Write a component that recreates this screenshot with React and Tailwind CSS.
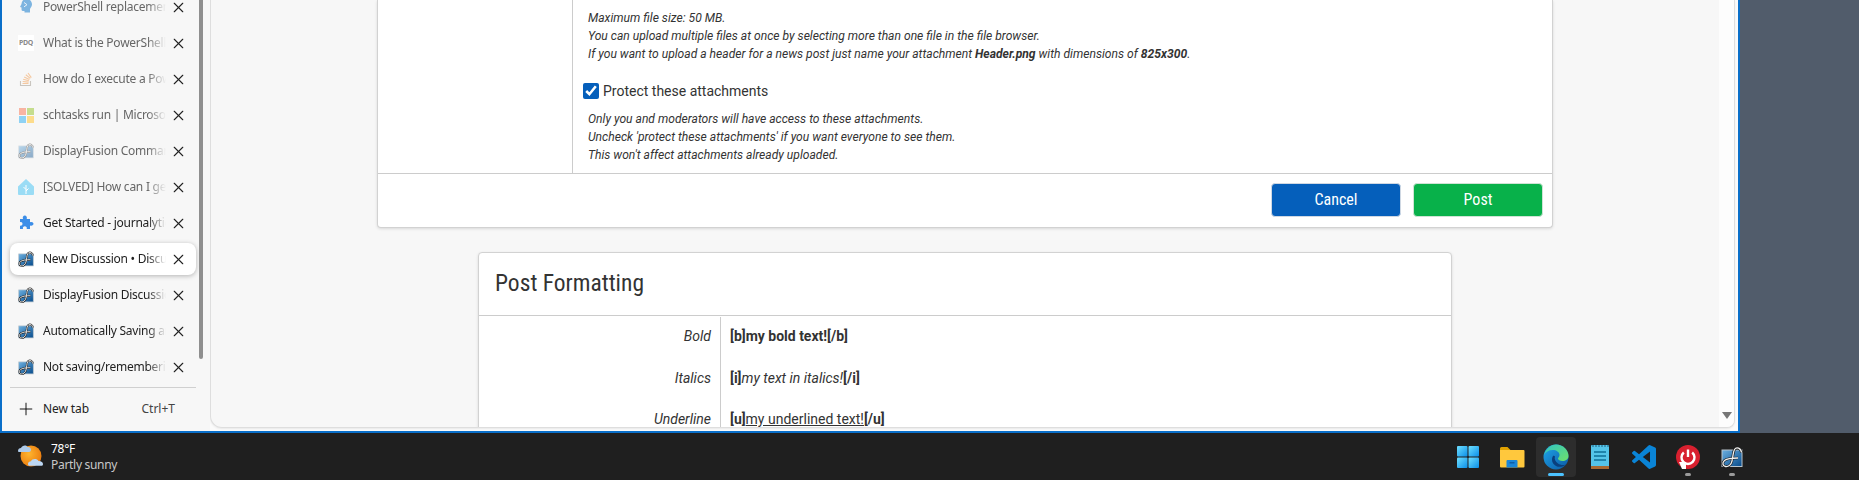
import React from 'react';
import { X, Plus } from 'lucide-react';

const DfIcon = ({ size = 16, faded = false }) => (
  <svg width={size} height={size} viewBox="0 0 22 22" className={faded ? 'opacity-45' : ''}>
    <defs>
      <linearGradient id="dfg" x1="0" y1="0" x2="1" y2="1">
        <stop offset="0" stopColor="#6db0e0" />
        <stop offset="1" stopColor="#064a8a" />
      </linearGradient>
    </defs>
    <rect x="1" y="4" width="20" height="16.500" fill="url(#dfg)" stroke="#b9c4cc" strokeWidth="1" />
    <path d="M20.500 6.500C20 2 15.500 .5 13.500 3.500 12 6 12 11 11 15c-.8 3.500-3.500 6-6.500 5.500C1.500 20 1 16.500 3.500 14.500 6 12.500 11 12 17 12" fill="none" stroke="#1a1a1a" strokeWidth="2.600" />
    <path d="M20.500 6.500C20 2 15.500 .5 13.500 3.500 12 6 12 11 11 15c-.8 3.500-3.500 6-6.500 5.500C1.500 20 1 16.500 3.500 14.500 6 12.500 11 12 17 12" fill="none" stroke="#f2f2f2" strokeWidth="1.300" />
  </svg>
);

const PsIcon = () => (
  <svg width="16" height="16" viewBox="0 0 16 16">
    <path d="M8 0c4 0 6 2.500 6 5.500 0 2-1.500 3-2 4.500v3.500H6.500V12H4.800C3.800 12 3.500 11 3.500 10V8.500L2 8l1.500-3C3.800 2 5.500 0 8 0z" fill="#7db4e0" />
    <path d="M6 3.500l3 2.200-3 2.200" fill="none" stroke="#e8f2fa" strokeWidth="1" />
  </svg>
);

const PdqIcon = () => (
  <span className="flex h-4 w-4 items-center justify-center bg-white text-[7px] font-bold tracking-[-0.3px] text-[#8b8b8b]">
    PDQ
  </span>
);

const SoIcon = () => (
  <svg width="16" height="16" viewBox="0 0 16 16" fill="none">
    <path d="M2.500 10v4.500h10V10" stroke="#c9c5bf" strokeWidth="1.100" />
    <path d="M4.500 12.500h6M4.700 10.500l5.900.6M5.200 8.300l5.700 1.500M6.200 6l5.200 2.600M7.800 3.800l4.500 3.600M10 2l3.300 4.600" stroke="#f5c8a0" strokeWidth="1.100" />
  </svg>
);

const MsIcon = () => (
  <div className="grid h-[15px] w-[15px] grid-cols-2 gap-px">
    <span className="bg-[#f8b4a2]" />
    <span className="bg-[#c5dd8e]" />
    <span className="bg-[#8fd2f4]" />
    <span className="bg-[#fddc8c]" />
  </div>
);

const HaIcon = () => (
  <svg width="16" height="16" viewBox="0 0 16 16">
    <path d="M8 0l8 7.500V15a1 1 0 0 1-1 1H1a1 1 0 0 1-1-1V7.500z" fill="#9adcf5" />
    <path d="M8 15V6M8 10.500L5.500 8M8 12l2.500-2.500" stroke="#fff" strokeWidth="1" fill="none" />
  </svg>
);

const PuzzleIcon = () => (
  <svg width="16" height="16" viewBox="0 0 16 16">
    <path d="M2 4h3c-.8-2 .5-3.500 1.800-3.500S9.500 2 8.700 4H12v3.200c2-.8 3.500.3 3.500 1.600S14 11.300 12 10.500V14H8.700c.6-1.800-.6-2.800-1.900-2.800S4.400 12.200 5 14H2v-3.500c1.500.6 2.500-.5 2.500-1.700S3.500 6.500 2 7.200z" fill="#3c8ee8" />
  </svg>
);

const tabs = [
  { title: 'PowerShell replacement for', icon: <PsIcon />, faded: true },
  { title: 'What is the PowerShell', icon: <PdqIcon />, faded: true },
  { title: 'How do I execute a PowerShell', icon: <SoIcon />, faded: true },
  { title: 'schtasks run | Microsoft Learn', icon: <MsIcon />, faded: true },
  { title: 'DisplayFusion Command Line', icon: <DfIcon faded />, faded: true },
  { title: '[SOLVED] How can I get this', icon: <HaIcon />, faded: true },
  { title: 'Get Started - journalytic', icon: <PuzzleIcon /> },
  { title: 'New Discussion • Discussions', icon: <DfIcon />, active: true },
  { title: 'DisplayFusion Discussions', icon: <DfIcon /> },
  { title: 'Automatically Saving and', icon: <DfIcon /> },
  { title: 'Not saving/remembering', icon: <DfIcon /> },
];

const TabRow = ({ title, icon, faded, active }) => (
  <div
    className={`flex h-[32px] items-center rounded-lg pl-2 pr-[9px] ${
      active ? 'bg-white shadow-[0_1px_5px_rgba(0,0,0,0.28)]' : ''
    }`}
  >
    <div className="flex w-[16px] shrink-0 items-center justify-center">{icon}</div>
    <div
      className={`ml-[9px] w-[123px] overflow-hidden whitespace-nowrap text-[12px] tracking-[-0.25px] [mask-image:linear-gradient(to_right,black_85%,transparent)] ${
        faded ? 'text-[#666]' : 'text-[#222]'
      }`}
    >
      {title}
    </div>
    <X size={17} strokeWidth={1.6} className="ml-auto text-[#222]" />
  </div>
);

const Sidebar = () => (
  <div className="relative flex w-[208px] shrink-0 flex-col bg-[#f7f7f7] pl-[8px] pr-[14px] font-['Noto_Sans',sans-serif]">
    <div className="absolute right-[7px] top-0 h-[359px] w-[4px] rounded-b bg-[#8f8f8f]" />
    <div className="-mt-[9px] flex flex-col gap-[4px]">
      {tabs.map((t) => (
        <TabRow key={t.title} {...t} />
      ))}
    </div>
    <div className="mt-[4px] border-t border-[#d0d0d0]" />
    <div className="flex h-[42px] items-center pl-[6px] text-[12px] text-[#222]">
      <Plus size={20} strokeWidth={1.1} className="text-black" />
      <span className="ml-[7px] tracking-[-0.1px]">New tab</span>
      <span className="ml-auto pr-[21px] text-[#444]">Ctrl+T</span>
    </div>
  </div>
);

const Note = ({ children }) => <p className="h-[18px] leading-[18px]">{children}</p>;

const UploadPanel = () => (
  <div className="mx-auto w-[1176px] rounded-b border border-t-0 border-[#d2d2d2] bg-white shadow-[0_1px_3px_rgba(0,0,0,0.12)]">
    <div className="flex h-[174px] border-b border-[#cccccc]">
      <div className="w-[195px] shrink-0 border-r border-[#cccccc]" />
      <div className="flex-1 pl-[15px] pr-4 pt-[9px] text-[12.1px] italic text-[#333]">
        <Note>Maximum file size: 50 MB.</Note>
        <Note>You can upload multiple files at once by selecting more than one file in the file browser.</Note>
        <Note>
          If you want to upload a header for a news post just name your attachment <b>Header.png</b> with dimensions of <b>825x300</b>.
        </Note>
        <label className="-ml-[5px] mt-[19px] flex h-[18px] items-center not-italic text-[14px] text-[#333]">
          <input type="checkbox" defaultChecked className="h-4 w-4 accent-[#055fbb]" />
          <span className="ml-[4px]">Protect these attachments</span>
        </label>
        <div className="mt-[10px]">
          <Note>Only you and moderators will have access to these attachments.</Note>
          <Note>Uncheck 'protect these attachments' if you want everyone to see them.</Note>
          <Note>This won't affect attachments already uploaded.</Note>
        </div>
      </div>
    </div>
    <div className="flex h-[53px] items-center justify-end gap-[12px] pb-[2px] pr-[9px]">
      <button className="h-[34px] w-[130px] rounded border border-[#cfd8e3] bg-[#055fbb] text-[16px] text-white [font-stretch:75%]">Cancel</button>
      <button className="h-[34px] w-[130px] rounded border border-[#cfe3d5] bg-[#08b14a] text-[16px] text-white [font-stretch:75%]">Post</button>
    </div>
  </div>
);

const FormatRow = ({ label, children }) => (
  <div className="flex h-[41.500px]">
    <div className="w-[242px] shrink-0 border-r border-[#cccccc] pr-[9px] pt-[9px] text-right italic">{label}</div>
    <div className="flex-1 pl-[9px] pt-[9px]">{children}</div>
  </div>
);

const FormattingCard = () => (
  <div className="ml-[267px] mt-[24px] w-[974px] rounded-t border border-[#d2d2d2] bg-white shadow-[0_1px_3px_rgba(0,0,0,0.12)]">
    <div className="flex h-[63px] items-center border-b border-[#cccccc] pl-[16px] text-[23.500px] text-[#333] [font-stretch:85%]">
      Post Formatting
    </div>
    <div className="pt-[1px] text-[14px] leading-[20px] text-[#333]">
      <FormatRow label="Bold">
        <b>[b]my bold text![/b]</b>
      </FormatRow>
      <FormatRow label="Italics">
        <b>[i]</b>
        <i>my text in italics!</i>
        <b>[/i]</b>
      </FormatRow>
      <FormatRow label="Underline">
        <b>[u]</b>
        <u>my underlined text!</u>
        <b>[/u]</b>
      </FormatRow>
    </div>
  </div>
);

const PageArea = () => (
  <div className="flex min-w-0 flex-1 overflow-hidden rounded-bl-xl rounded-br-lg border-b border-l border-r border-[#dedede] bg-[#f7f7f7] shadow-[0_1px_2px_rgba(0,0,0,0.08)]">
    <div className="min-w-0 flex-1 overflow-hidden font-['Roboto',sans-serif]">
      <UploadPanel />
      <FormattingCard />
    </div>
    <div className="flex w-[15px] shrink-0 flex-col items-center justify-end bg-[#fdfdfd] pb-[8px]">
      <div className="h-0 w-0 border-x-[5px] border-t-[7px] border-x-transparent border-t-[#777]" />
    </div>
  </div>
);

const StartIcon = () => (
  <svg width="24" height="24" viewBox="0 0 24 24">
    <defs>
      <linearGradient id="st" x1="0" y1="0" x2="1" y2="1">
        <stop offset="0" stopColor="#6fe0ff" />
        <stop offset="1" stopColor="#0a8ee8" />
      </linearGradient>
    </defs>
    <rect x="1" y="1" width="10.500" height="10.500" rx="1" fill="url(#st)" />
    <rect x="12.500" y="1" width="10.500" height="10.500" rx="1" fill="url(#st)" />
    <rect x="1" y="12.500" width="10.500" height="10.500" rx="1" fill="url(#st)" />
    <rect x="12.500" y="12.500" width="10.500" height="10.500" rx="1" fill="url(#st)" />
  </svg>
);

const FolderIcon = () => (
  <svg width="26" height="24" viewBox="0 0 26 24">
    <path d="M1 3.500A1.500 1.500 0 0 1 2.500 2h6l3 3H1z" fill="#e0a100" />
    <path d="M1 5h23.500a1 1 0 0 1 1 1v15.500a1 1 0 0 1-1 1H2a1 1 0 0 1-1-1z" fill="#ffc83d" />
    <path d="M8.500 15h9a1 1 0 0 1 1 1v6.500h-11V16a1 1 0 0 1 1-1z" fill="#1b86d8" />
    <rect x="10.500" y="17" width="5" height="1.500" fill="#0f5ea6" />
  </svg>
);

const EdgeIcon = () => (
  <svg width="26" height="26" viewBox="0 0 26 26">
    <defs>
      <linearGradient id="eg1" x1="0" y1="0" x2="1" y2="1">
        <stop offset="0" stopColor="#2fc4c4" />
        <stop offset="1" stopColor="#6fe06a" />
      </linearGradient>
      <linearGradient id="eg2" x1="0" y1="0" x2="1" y2="1">
        <stop offset="0" stopColor="#1fa6ea" />
        <stop offset="1" stopColor="#0c59a4" />
      </linearGradient>
    </defs>
    <circle cx="13" cy="13" r="12.500" fill="url(#eg2)" />
    <path d="M1 11C3 3.500 9 .5 13 .5c7 0 12.500 5.500 12.500 11.500 0 3.500-3 5-6 5-2.500 0-4.500-1-4.500-2.500 0-1 1.500-1.500 1.500-3.500C16.500 8 13 6 10 6 5.500 6 2.500 8 1 11z" fill="url(#eg1)" />
    <path d="M10 12c-2 3-1 8 3 10 3 1.500 7 1 10-1.500-3 1-6 .5-8-1C12.500 17.500 11 15 12 12.500c-.5-.8-1.500-.8-2-.5z" fill="#0a3f7d" />
  </svg>
);

const NotepadIcon = () => (
  <svg width="20" height="26" viewBox="0 0 20 26">
    <rect x="1" y="1" width="18" height="24" rx="1" fill="#55c4e8" />
    <rect x="1" y="22" width="18" height="3" fill="#a86a32" />
    <path d="M4 8h12M4 12h12M4 16h12" stroke="#0f6f96" strokeWidth="1.600" />
    <path d="M3 1v2M6 1v2M9 1v2M12 1v2M15 1v2M18 1v2" stroke="#1d5f80" strokeWidth="1" />
  </svg>
);

const VscodeIcon = () => (
  <svg width="24" height="24" viewBox="0 0 24 24">
    <path
      d="M23.15 2.587L18.21.21a1.494 1.494 0 0 0-1.705.29l-9.46 8.63-4.12-3.128a.999.999 0 0 0-1.276.057L.327 7.261A1 1 0 0 0 .326 8.74L3.899 12 .326 15.26a1 1 0 0 0 .001 1.479L1.65 17.94a.999.999 0 0 0 1.276.057l4.12-3.128 9.46 8.63a1.492 1.492 0 0 0 1.704.29l4.942-2.377A1.5 1.5 0 0 0 24 20.06V3.939a1.5 1.5 0 0 0-.85-1.352zm-5.146 14.861L10.826 12l7.178-5.448v10.896z"
      fill="#0a84d6"
    />
  </svg>
);

const PowerIcon = () => (
  <svg width="24" height="24" viewBox="0 0 24 24">
    <circle cx="12" cy="12" r="12" fill="#d8202f" />
    <path d="M7.800 7.500a6.500 6.500 0 1 0 8.400 0" fill="none" stroke="#fff" strokeWidth="2.400" />
    <path d="M12 4.500v7.500" stroke="#fff" strokeWidth="2.400" />
    <path d="M3 17h7v7H6z" fill="#fff" />
  </svg>
);

const WeatherIcon = () => (
  <svg width="28" height="27" viewBox="0 0 28 27">
    <defs>
      <radialGradient id="sun" cx=".4" cy=".4" r=".7">
        <stop offset="0" stopColor="#ffb52e" />
        <stop offset="1" stopColor="#e8770c" />
      </radialGradient>
    </defs>
    <circle cx="14" cy="13" r="10.500" fill="url(#sun)" />
    <path d="M1 8c0-1.800 1.300-3 3-3C5 2.500 9 1.500 10.500 4c2-.3 3.500 1.200 3.500 2.800 0 1-.6 2.200-2 2.200H2.500C1.500 9 1 8.800 1 8z" fill="#aecbea" />
    <path d="M11 21c0-1.800 1.500-2.800 3-2.800 1-2.600 6-3 7.500-.2 2.500-.2 4.500 1.200 4.500 3 0 1-.5 1.800-1.500 1.800h-12C11.500 22.800 11 22 11 21z" fill="#bcd6f2" />
  </svg>
);

const TaskIcon = ({ children, dot, active }) => (
  <div className={`relative flex h-10 w-10 items-center justify-center rounded ${active ? 'bg-[#2d2d2d]' : ''}`}>
    {children}
    {active && <span className="absolute bottom-[1px] h-[3px] w-[16px] rounded-full bg-[#4cc2ff]" />}
    {dot && <span className="absolute bottom-[1px] h-[3px] w-[6px] rounded-full bg-[#9a9a9a]" />}
  </div>
);

const Taskbar = () => (
  <div className="flex h-[47px] items-center bg-[#1f1f1f] pl-[17px] pr-[107px] font-['Noto_Sans',sans-serif]">
    <WeatherIcon />
    <div className="ml-[6px] text-[12px] leading-[16px] tracking-[-0.3px]">
      <div className="text-white">78°F</div>
      <div className="text-[#c8c8c8]">Partly sunny</div>
    </div>
    <div className="ml-auto flex items-center gap-[4px]">
      <TaskIcon><StartIcon /></TaskIcon>
      <TaskIcon><FolderIcon /></TaskIcon>
      <TaskIcon active><EdgeIcon /></TaskIcon>
      <TaskIcon><NotepadIcon /></TaskIcon>
      <TaskIcon><VscodeIcon /></TaskIcon>
      <TaskIcon dot><PowerIcon /></TaskIcon>
      <TaskIcon dot><DfIcon size={22} /></TaskIcon>
    </div>
  </div>
);

export default function App() {
  return (
    <div className="flex h-[480px] w-[1859px] flex-col overflow-hidden">
      <div className="flex h-[433px] bg-[#515c6b]">
        <div className="flex w-[1740px] overflow-hidden border-b-2 border-l-2 border-r-2 border-[#0a6fc9] bg-[#fbfbfb]">
          <Sidebar />
          <div className="flex min-w-0 flex-1 pb-[3px] pr-[3px]">
            <PageArea />
          </div>
        </div>
      </div>
      <Taskbar />
    </div>
  );
}
